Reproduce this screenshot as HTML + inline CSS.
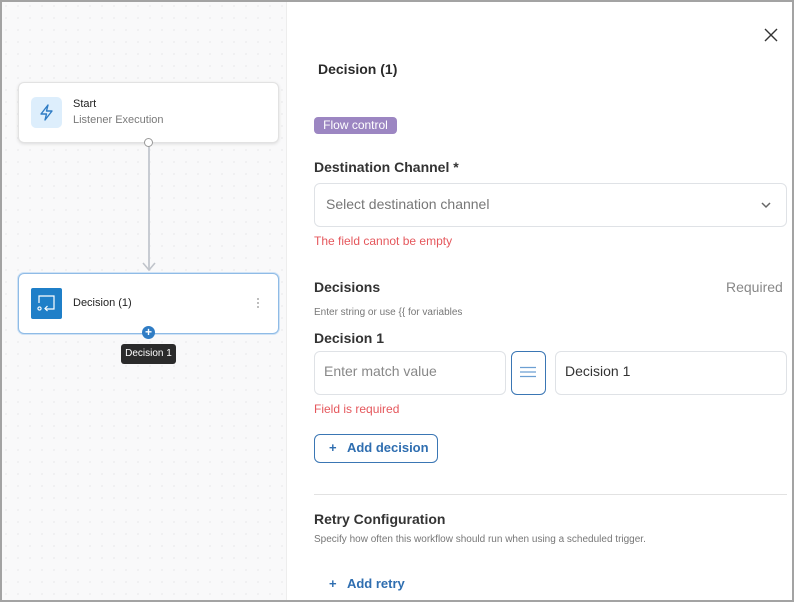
<!DOCTYPE html>
<html><head><meta charset="utf-8"><style>
*{box-sizing:border-box;margin:0;padding:0}
body{width:794px;height:602px;overflow:hidden;font-family:"Liberation Sans",sans-serif;background:#fff;position:relative}
.frame{position:absolute;left:0;top:0;width:794px;height:602px;border:2px solid #a3a3a3;pointer-events:none;z-index:10}
.canvas{position:absolute;left:0;top:0;width:287px;height:602px;background-color:#f9f9fa;background-image:radial-gradient(#dcdce0 0.7px,transparent 0.8px);background-size:12px 12px;border-right:1px solid #ededed}
.panel{position:absolute;left:287px;top:0;width:507px;height:602px;background:#fff}
.node{position:absolute;left:18px;width:261px;height:61px;background:#fff;border-radius:6px;border:1px solid #e2e2e2;box-shadow:0 1px 3px rgba(0,0,0,.12)}
.abs{position:absolute}
.t{position:absolute;white-space:nowrap}
.inp{position:absolute;border:1px solid #dfe2e6;border-radius:6px;background:#fff}
</style></head><body>
<div class="canvas">
 <div class="node" style="top:82px">
  <div class="abs" style="left:12px;top:14px;width:31px;height:31px;background:#ddeefc;border-radius:5px">
   <svg width="31" height="31" viewBox="0 0 31 31"><path d="M17 8 L10 17 H15.5 L14 23 L21 14 H15.5 Z" fill="none" stroke="#2f7cc4" stroke-width="1.4" stroke-linejoin="round"/></svg>
  </div>
  <div class="t" style="left:54px;top:15px;font-size:11px;color:#222">Start</div>
  <div class="t" style="left:54px;top:31px;font-size:11px;color:#7a7a7a">Listener Execution</div>
 </div>
 <div class="abs" style="left:148px;top:143px;width:2px;height:127px;background:#c8ccd3"></div>
 <div class="abs" style="left:144px;top:138px;width:9px;height:9px;border:1.3px solid #999;border-radius:50%;background:#fff"></div>
 <svg class="abs" style="left:142px;top:262px" width="14" height="10"><path d="M1 1 L7 8 L13 1" fill="none" stroke="#c0c4cb" stroke-width="1.6"/></svg>
 <div class="node" style="top:273px;border:1px solid #8fbbe6;box-shadow:0 0 0 1px #cfe2f5">
  <div class="abs" style="left:12px;top:14px;width:31px;height:31px;background:#1f7fc8;border-radius:2px">
   <svg width="31" height="31" viewBox="0 0 31 31"><path d="M8 15 V8 H23 V21 H14" fill="none" stroke="#fff" stroke-width="1.2"/><path d="M16.5 18 L14 20.5 L16.5 23" fill="none" stroke="#fff" stroke-width="1.2"/><circle cx="8.5" cy="20.5" r="1.6" fill="none" stroke="#fff" stroke-width="1.1"/></svg>
  </div>
  <div class="t" style="left:54px;top:23px;font-size:11px;color:#222">Decision (1)</div>
  <div class="abs" style="left:238px;top:24px;width:2px;height:2px;background:#aaa;border-radius:50%"></div>
  <div class="abs" style="left:238px;top:28px;width:2px;height:2px;background:#aaa;border-radius:50%"></div>
  <div class="abs" style="left:238px;top:32px;width:2px;height:2px;background:#aaa;border-radius:50%"></div>
 </div>
 <div class="abs" style="left:142px;top:326px;width:13px;height:13px;border-radius:50%;background:#2f7cc4;color:#fff;font-size:12px;line-height:13px;text-align:center;font-weight:bold">+</div>
 <div class="abs" style="left:121px;top:344px;width:55px;height:20px;background:#2b2b2b;border-radius:3px;color:#fff;font-size:10px;line-height:20px;text-align:center">Decision 1</div>
</div>
<div class="panel">
 <svg class="abs" style="left:477px;top:28px" width="14" height="14"><path d="M1 1 L13 13 M13 1 L1 13" stroke="#333" stroke-width="1.4"/></svg>
 <div class="t" style="left:31px;top:61px;font-size:14px;font-weight:bold;color:#2a2a2a">Decision (1)</div>
 <div class="abs" style="left:27px;top:117px;width:83px;height:17px;background:#9c86c2;border-radius:4px;color:#fff;font-size:12px;line-height:17px;text-align:center">Flow control</div>
 <div class="t" style="left:27px;top:159px;font-size:14px;font-weight:bold;color:#333">Destination Channel *</div>
 <div class="inp" style="left:27px;top:183px;width:473px;height:44px"></div>
 <div class="t" style="left:39px;top:196px;font-size:14px;color:#777">Select destination channel</div>
 <svg class="abs" style="left:473px;top:201px" width="12" height="8"><path d="M2 2 L6 6 L10 2" fill="none" stroke="#666" stroke-width="1.5"/></svg>
 <div class="t" style="left:27px;top:234px;font-size:12px;color:#e5575c">The field cannot be empty</div>
 <div class="t" style="left:27px;top:279px;font-size:14px;font-weight:bold;color:#333">Decisions</div>
 <div class="t" style="left:439px;top:279px;font-size:14px;color:#888">Required</div>
 <div class="t" style="left:27px;top:307px;font-size:10px;color:#777">Enter string or use {{ for variables</div>
 <div class="t" style="left:27px;top:330px;font-size:14px;font-weight:bold;color:#333">Decision 1</div>
 <div class="inp" style="left:27px;top:351px;width:192px;height:44px"></div>
 <div class="t" style="left:37px;top:363px;font-size:14px;color:#888">Enter match value</div>
 <div class="abs" style="left:224px;top:351px;width:35px;height:44px;border:1px solid #3a76b4;border-radius:6px"></div>
 <svg class="abs" style="left:232px;top:365px" width="18" height="14"><path d="M1 2.5 H17 M1 7 H17 M1 11.5 H17" stroke="#6c9fd2" stroke-width="1.2"/></svg>
 <div class="inp" style="left:268px;top:351px;width:232px;height:44px"></div>
 <div class="t" style="left:278px;top:363px;font-size:14px;color:#333">Decision 1</div>
 <div class="t" style="left:27px;top:402px;font-size:12px;color:#e5575c">Field is required</div>
 <div class="abs" style="left:27px;top:434px;width:124px;height:29px;border:1px solid #3a76b4;border-radius:6px"></div>
 <div class="t" style="left:42px;top:440px;font-size:13px;color:#2f6eb0;font-weight:bold">+&nbsp;&nbsp; Add decision</div>
 <div class="abs" style="left:27px;top:494px;width:473px;height:1px;background:#e2e2e2"></div>
 <div class="t" style="left:27px;top:511px;font-size:14px;font-weight:bold;color:#333">Retry Configuration</div>
 <div class="t" style="left:27px;top:534px;font-size:10px;color:#777">Specify how often this workflow should run when using a scheduled trigger.</div>
 <div class="t" style="left:42px;top:576px;font-size:13px;color:#2f6eb0;font-weight:bold">+&nbsp;&nbsp; Add retry</div>
</div>
<div class="frame"></div>
</body></html>
